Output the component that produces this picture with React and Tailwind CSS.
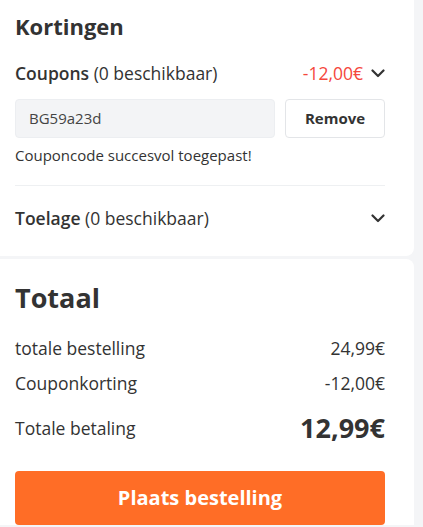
import React from "react";

function Chevron() {
  return (
    <svg width="14" height="9" viewBox="0 0 14 9" fill="none" className="shrink-0">
      <path d="M1.5 1.5L7 7L12.5 1.5" stroke="#333" strokeWidth="2.2" strokeLinecap="round" strokeLinejoin="round" />
    </svg>
  );
}

export default function App() {
  return (
    <div className="w-[423px] h-[527px] overflow-hidden bg-[#f4f5f7] text-[#333] font-['Open_Sans',sans-serif]">
      <div className="w-[414px]">
        {/* Kortingen */}
        <div className="bg-white rounded-br-lg pl-[15px] pr-[29px] pt-[10px] pb-[27px]">
          <h2 className="text-[22px] font-bold leading-[32px]">Kortingen</h2>
          <div className="flex items-center justify-between mt-[20px] h-[22px]">
            <p className="text-[17.5px]">
              <span className="font-semibold">Coupons</span> (0 beschikbaar)
            </p>
            <div className="flex items-center gap-[8px]">
              <span className="text-[17.5px] text-[#f5473c]">-12,00€</span>
              <Chevron />
            </div>
          </div>
          <div className="flex gap-[10px] mt-[15px]">
            <div className="flex-1 h-[39px] rounded-[4px] border border-[#eceef1] bg-[#f3f4f6] px-[13px] flex items-center text-[15px] text-[#444]">
              BG59a23d
            </div>
            <button className="w-[100px] h-[39px] rounded-[4px] border border-[#e3e5e8] bg-white text-[15px] font-bold text-[#333]">
              Remove
            </button>
          </div>
          <p className="text-[15px] mt-[7px] leading-[20px]">Couponcode succesvol toegepast!</p>
          <div className="border-t border-[#eef0f2] mt-[20px]"></div>
          <div className="flex items-center justify-between mt-[21px] h-[22px]">
            <p className="text-[17.5px]">
              <span className="font-semibold">Toelage</span> (0 beschikbaar)
            </p>
            <Chevron />
          </div>
        </div>

        {/* Totaal */}
        <div className="bg-white rounded-tr-lg mt-[3px] pl-[15px] pr-[29px] pt-[21px]">
          <h2 className="text-[27px] font-bold leading-[36px]">Totaal</h2>
          <div className="flex justify-between items-center mt-[20px] text-[17.5px] leading-[24px]">
            <span>totale bestelling</span>
            <span>24,99€</span>
          </div>
          <div className="flex justify-between items-center mt-[11px] text-[17.5px] leading-[24px]">
            <span>Couponkorting</span>
            <span>-12,00€</span>
          </div>
          <div className="flex justify-between items-center mt-[15px] h-[36px]">
            <span className="text-[17.5px]">Totale betaling</span>
            <span className="text-[27px] font-bold">12,99€</span>
          </div>
          <button className="w-full h-[54px] mt-[25px] rounded-[4px] bg-[#ff6d26] text-white text-[20px] font-bold">
            Plaats bestelling
          </button>
        </div>
      </div>
    </div>
  );
}
